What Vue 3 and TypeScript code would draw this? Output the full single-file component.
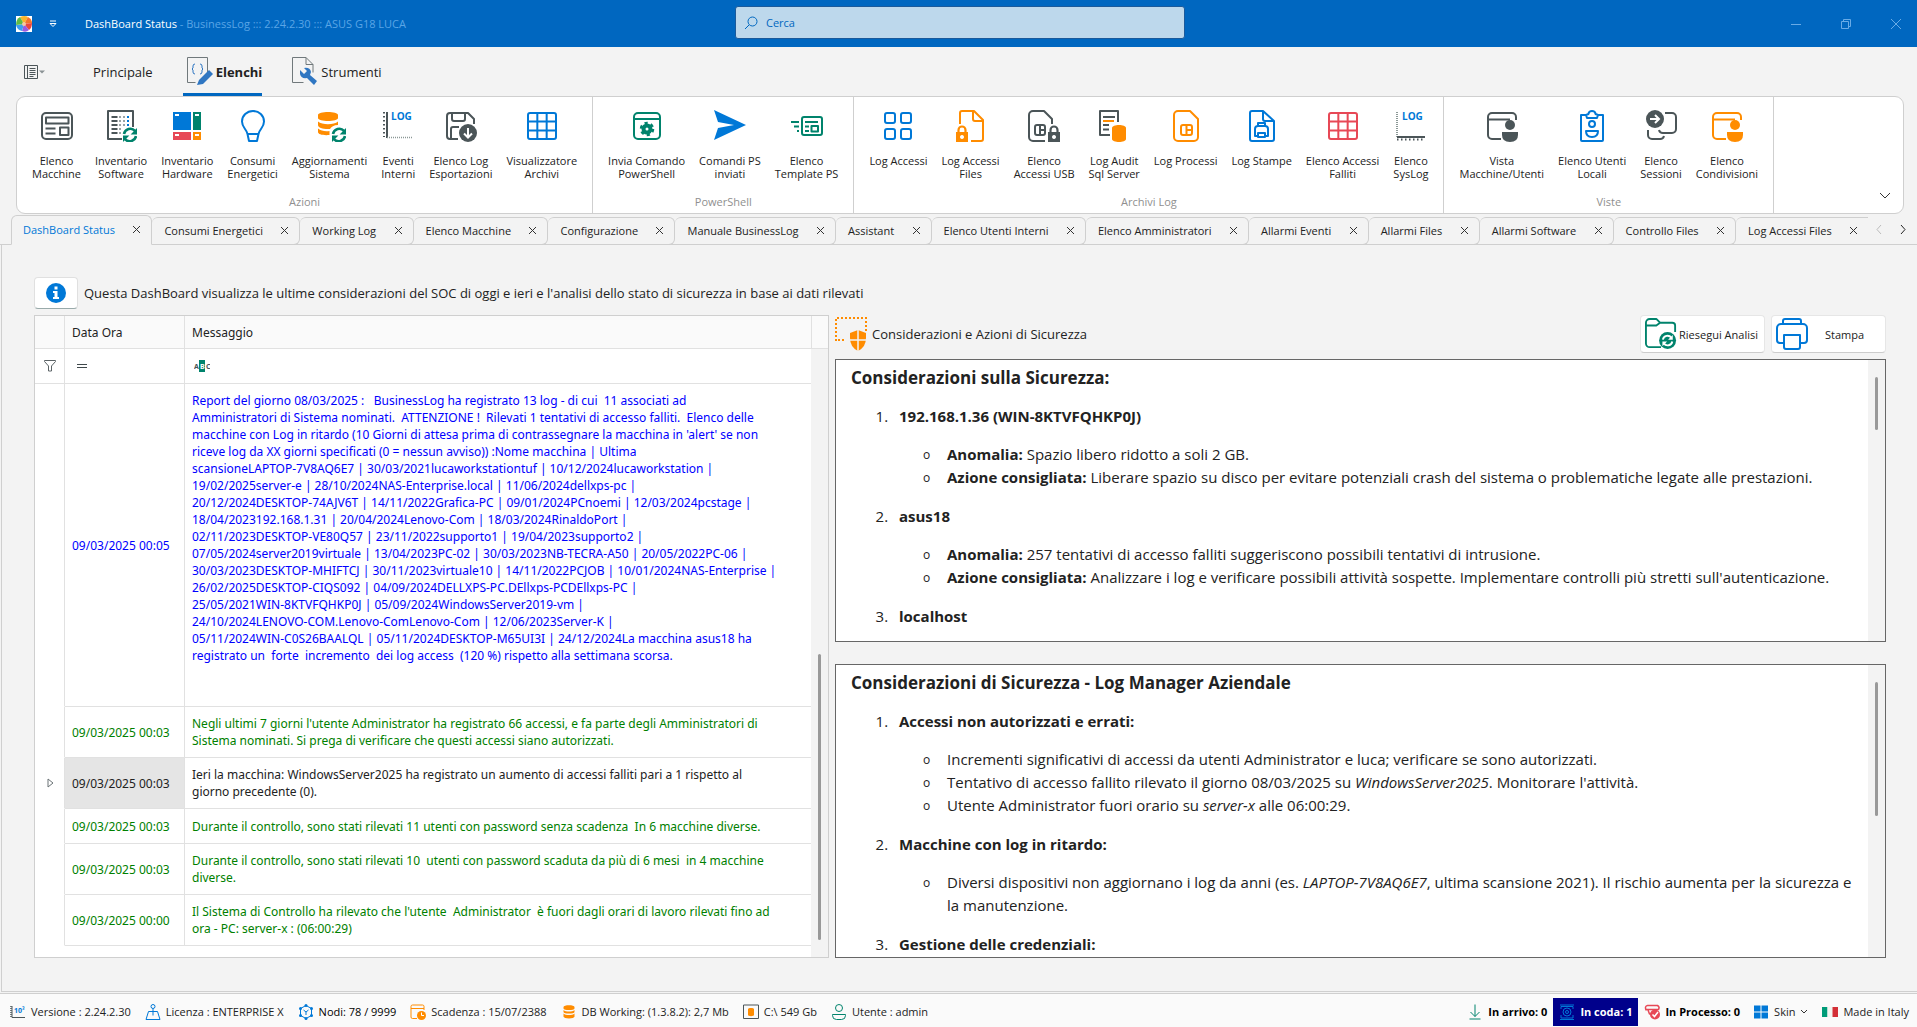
<script setup lang="ts">
import { ref } from 'vue'

interface RibbonItem { icon: string; lines: string[] }
interface RibbonGroup { title: string; items: RibbonItem[] }
interface LogRow { date: string; tone: string; text: string; selected?: boolean }
interface StatusItem { icon: string; text: string; kind?: string }

const D = '#4b5558'
const B = '#0078d7'
const G = '#00836c'
const O = '#ff8c00'
const R = '#e74856'

const outline = (color: string, body: string, width = 2) =>
  `<g fill="none" stroke="${color}" stroke-width="${width}" stroke-linejoin="round">${body}</g>`

const refresh = `<g fill="none" stroke="${G}" stroke-width="2.6"><path d="M19 24a6.4 6.4 0 0 1 11-3.2"/><path d="M31 26a6.4 6.4 0 0 1-11 3.2"/></g><path fill="${G}" d="M32 18v6.4h-6.4zM18 32v-6.4h6.4z"/>`
const grid = (color: string, x: number) =>
  outline(color, `<rect x="${x}" y="3" width="${32 - 2 * x}" height="26" rx="2"/><path d="M${x} 11.5h${32 - 2 * x}M${x} 20.5h${32 - 2 * x}M${x + (32 - 2 * x) / 3} 3v26M${x + (64 - 4 * x) / 3} 3v26"/>`)
const windowUser = (color: string) =>
  outline(color, '<path d="M15 29H6a4 4 0 0 1-4-4V7a4 4 0 0 1 4-4h20a4 4 0 0 1 4 4v3M2 9.500h22"/>') +
  `<circle cx="24" cy="15" r="5" fill="${color}"/><path fill="${color}" d="M16 22h16v3q0 7-8 7t-8-7z"/>`
const lock = (color: string, x: number, y: number) =>
  `<g transform="translate(${x} ${y})"><path fill="none" stroke="${color}" stroke-width="2.200" d="M2.500 7V5a3.500 3.500 0 0 1 7 0v2"/><path fill="${color}" fill-rule="evenodd" d="M0 7h12v10H0zM6 10a2 2 0 1 0 .01 0z"/></g>`

const icons: Record<string, string> = {
  list: outline(D, '<rect x="1" y="3" width="30" height="26" rx="4"/><rect x="5" y="7.500" width="22.500" height="6"/><path d="M4.500 18.500h10M4.500 23.500h10"/><rect x="19" y="17.500" width="8.500" height="7.500"/>'),
  software: outline(D, '<path d="M28 17V1H3v28h14"/><path d="M6.500 7h6M6.500 11h6M6.500 15h6M6.500 19h6M6.500 23h6"/>') +
    `<g stroke="#9aa3a5" stroke-width="2" stroke-dasharray="2 2"><path d="M14 7h7M14 11h7M14 15h7M14 19h4M14 23h2"/></g><path stroke="${B}" stroke-width="2" stroke-dasharray="2 2" d="M23 6v12"/>` + refresh,
  hardware: `<path fill="${B}" d="M2 2h18v18H2z"/><path fill="${G}" d="M22 2h8v18h-8z"/><path fill="${R}" d="M2 22h18v8H2z"/><path fill="${O}" d="M22 22h8v8h-8z"/><path fill="#fff" d="M4 4h4v2H4zM24 4h4v2h-4zM4 24h4v2H4zM24 24h4v2h-4z"/>`,
  bulb: outline(B, '<path d="M10.500 24C9.500 19 5 17.500 5 11.500a11 10.500 0 0 1 22 0C27 17.500 22.500 19 21.500 24zM10.500 24l1.500 7h8l1.500-7"/>'),
  dbrefresh: `<path fill="${O}" d="M4 5c0-4 20-4 20 0v3c0 4-20 4-20 0zM4 11.500c4 3.500 16 3.500 20 0V15c-4 0-7 2-8 4-6 .5-12-1-12-4zM4 18.500c3 2.500 7 3 11.500 2.500v4C9 25.500 4 24.500 4 22z"/>` + refresh,
  log: `<path stroke="${D}" stroke-width="2" d="M5 2v26"/><path stroke="${D}" stroke-width="2" stroke-dasharray="1.500 2.500" d="M2 2v25" fill="none"/><path stroke="#8b9896" stroke-width="1.500" stroke-dasharray="1 1" d="M5 27.500h26"/><text x="9" y="10" font-size="10" font-weight="700" fill="${B}">LOG</text>`,
  save: outline(D, '<path d="M13 29H5a3 3 0 0 1-3-3V6a3 3 0 0 1 3-3h18l6 6v5M7 3v6a2 2 0 0 0 2 2h9a2 2 0 0 0 2-2V3M6 29V19a2 2 0 0 1 2-2h6"/>') +
    `<circle cx="23" cy="23" r="9" fill="${D}"/><path fill="none" stroke="#fff" stroke-width="2" d="M23 18v9M19 23.500l4 4 4-4"/>`,
  gridblue: grid(B, 2),
  gridred: grid(R, 2),
  winGear: outline(G, '<rect x="3" y="3" width="26" height="26" rx="4"/><path d="M3 9h26"/>') +
    `<circle cx="16" cy="19" r="3.500" fill="none" stroke="${G}" stroke-width="4"/><circle cx="16" cy="19" r="6" fill="none" stroke="${G}" stroke-width="2.500" stroke-dasharray="3.140 3.140"/>`,
  send: `<path fill="${B}" d="M0 0l32 15L0 30l4-12 16-3L4 12z"/>`,
  template: outline(G, '<rect x="11" y="7" width="20" height="18" rx="2"/><path d="M0 12h8M3 16.500h5M6 21h2M14 12h13M14 16.500h4M14 21h4"/><rect x="20.500" y="16" width="6.500" height="5.500"/>'),
  tiles: outline(B, '<rect x="3" y="3" width="10" height="10" rx="2"/><rect x="19" y="3" width="10" height="10" rx="2"/><rect x="3" y="19" width="10" height="10" rx="2"/><rect x="19" y="19" width="10" height="10" rx="2"/>'),
  fileLock: outline(O, '<path d="M5 14V3a2 2 0 0 1 2-2h12l9 9v19a2 2 0 0 1-2 2H16M18 1v8a2 2 0 0 0 2 2h8"/>') + lock(O, 1, 15),
  simLock: outline(D, '<path d="M17 31H5a4 4 0 0 1-4-4V5a4 4 0 0 1 4-4h11l8 8v5"/><rect x="7" y="15" width="10" height="10" rx="2"/><path d="M12 15v10M12 20h5"/>') + lock(D, 20, 15),
  audit: outline(D, '<path d="M20 12V1H2v24h10"/><path d="M5 7h12M5 15h6M5 19.500h6"/>') + `<path stroke="${O}" stroke-width="2" d="M5 11h11"/><path fill="${O}" d="M14 18c0-4 14-4 14 0v11c0 4-14 4-14 0z"/>`,
  sim: outline(O, '<path d="M8 1h12l8 8v18a4 4 0 0 1-4 4H8a4 4 0 0 1-4-4V5a4 4 0 0 1 4-4z"/><rect x="11" y="15" width="11" height="10" rx="2"/><path d="M16.500 15v10M16.500 20h5.500"/>'),
  filePrint: outline(B, '<path d="M6 1h11l11 10v18a2 2 0 0 1-2 2H6a2 2 0 0 1-2-2V3a2 2 0 0 1 2-2zM17 1v8a2 2 0 0 0 2 2h9"/><path d="M12 16v-3h7v3M12 26H9v-7a3 3 0 0 1 3-3h7a3 3 0 0 1 3 3v7h-3M12 23h7v4h-7z"/>'),
  syslog: `<path stroke="#8b9896" stroke-width="2" stroke-dasharray="1 1" d="M2 2v25"/><path stroke="${D}" stroke-width="2" d="M2 27h28"/><path stroke="${D}" stroke-width="2" stroke-dasharray="1.500 2.500" d="M2 29.500h28"/><text x="7" y="10" font-size="10" font-weight="700" fill="${B}">LOG</text>`,
  vista: windowUser(D),
  condivisioni: windowUser(O),
  badge: outline(B, '<path d="M10 5H5v25a1 1 0 0 0 1 1h20a1 1 0 0 0 1-1V5h-5"/><path d="M12.500 4a3.500 3 0 0 1 7 0l2.500 1-1 3h-10l-1-3z"/><circle cx="16" cy="14" r="3"/><path d="M10 21h12q0 6-6 6t-6-6z"/>'),
  sessions: `<circle cx="10" cy="9" r="9" fill="${D}"/><path fill="none" stroke="#fff" stroke-width="2" d="M5 9h9M10 5l4 4-4 4"/>` +
    outline(D, '<path d="M20 3h7a4 4 0 0 1 4 4v12a4 4 0 0 1-4 4H18a4 4 0 0 1-4-3M3 20v5a4 4 0 0 0 4 4h8a4 4 0 0 0 4-3"/>'),
  folder: outline(G, '<path d="M17 31H5a4 4 0 0 1-4-4V5a4 4 0 0 1 4-4h7l4 4h13a3 3 0 0 1 3 3v7M1 8h11l4-3"/>') +
    `<circle cx="24" cy="24" r="9" fill="${G}"/><g fill="none" stroke="#fff" stroke-width="2"><path d="M19 23a5 5 0 0 1 9-2M29 25a5 5 0 0 1-9 2"/></g><path fill="#fff" d="M29.500 18v5h-5zM18.500 30v-5h5z"/>`,
  printer: outline(B, '<path d="M7 6V3a2 2 0 0 1 2-2h14a2 2 0 0 1 2 2v3M7 25H4a3 3 0 0 1-3-3V10a4 4 0 0 1 4-4h22a4 4 0 0 1 4 4v12a3 3 0 0 1-3 3h-3"/><path d="M8 17h16v12a2 2 0 0 1-2 2H10a2 2 0 0 1-2-2z"/>'),
  shield: `<path fill="none" stroke="${O}" stroke-width="2" stroke-dasharray="2 2" d="M1 24V1h30v13M3 23h8"/><path fill="${O}" d="M15 16l8-3 8 3v5q0 9-8 13-8-4-8-13z"/><path stroke="#f3f3f3" stroke-width="1.500" d="M23 12v22M14 23h18"/>`,
  version: `<path fill="none" stroke="${D}" stroke-width="2" d="M4 4v23h26"/><path stroke="${D}" stroke-width="3" stroke-dasharray="2 2" d="M2 4v22"/><text x="8" y="17" font-size="14" font-weight="700" fill="${B}">10³</text>`,
  licence: outline(B, '<circle cx="16" cy="5" r="4"/><path d="M16 9v14M7 15h18l5 16H2z"/>'),
  node: outline(B, '<path d="M16 3l11 6v14l-11 6-11-6V9zM16 16v6M16 16l-5-4M16 16l5-4"/>') + `<g fill="${B}"><circle cx="16" cy="3" r="3"/><circle cx="27" cy="9" r="3"/><circle cx="27" cy="23" r="3"/><circle cx="16" cy="29" r="3"/><circle cx="5" cy="23" r="3"/><circle cx="5" cy="9" r="3"/></g>`,
  expiry: outline(O, '<path d="M14 29H5a3 3 0 0 1-3-3V5a3 3 0 0 1 3-3h20a3 3 0 0 1 3 3v7M2 9h26"/>') + `<circle cx="23" cy="23" r="9" fill="${O}"/><path fill="none" stroke="#fff" stroke-width="2" d="M23 17v6h5"/>`,
  db: `<path fill="${O}" d="M5 6c0-5 22-5 22 0v3c0 4-22 4-22 0zM5 12c4 4 18 4 22 0v4c0 4-22 4-22 0zM5 19c4 4 18 4 22 0v6c0 5-22 5-22 0z"/>`,
  disk: outline(D, '<path d="M1 2h30v27H1z"/>') + `<path fill="${O}" d="M10 10c0-3 12-3 12 0v12c0 3-12 3-12 0z"/>`,
  user: outline(G, '<circle cx="16" cy="8" r="7"/><path d="M3 21h26v2q0 8-8 8H11q-8 0-8-8z"/>'),
  down: outline(G, '<path d="M16 1v24M7 16l9 9 9-9M5 30h22"/>'),
  queue: outline(B, '<path d="M4 10V5h24v5M4 22v6h24v-6M2 2h28M2 31h28"/><circle cx="16" cy="16" r="8"/><circle cx="16" cy="16" r="3"/>'),
  process: outline(R, '<path d="M4 12q-3-8 3-9h20q5 3 2 8H4zM8 12l3 8h4"/>', 3) + `<circle cx="22" cy="21" r="10" fill="${R}"/><path fill="none" stroke="#fff" stroke-width="3" d="M17 21l4 4 7-9"/>`,
  windows: `<path fill="${B}" d="M2 3h13v12H2zM17 3h13v12H17zM2 17h13v12H2zM17 17h13v12H17z"/>`,
  flag: `<path fill="#009b78" d="M0 6h11v20H0z"/><path fill="#f4f5f0" d="M11 6h10v20H11z"/><path fill="#d32f36" d="M21 6h11v20H21z"/>`,
}

const groups: RibbonGroup[] = [
  { title: 'Azioni', items: [
    { icon: 'list', lines: ['Elenco', 'Macchine'] },
    { icon: 'software', lines: ['Inventario', 'Software'] },
    { icon: 'hardware', lines: ['Inventario', 'Hardware'] },
    { icon: 'bulb', lines: ['Consumi', 'Energetici'] },
    { icon: 'dbrefresh', lines: ['Aggiornamenti', 'Sistema'] },
    { icon: 'log', lines: ['Eventi', 'Interni'] },
    { icon: 'save', lines: ['Elenco Log', 'Esportazioni'] },
    { icon: 'gridblue', lines: ['Visualizzatore', 'Archivi'] },
  ] },
  { title: 'PowerShell', items: [
    { icon: 'winGear', lines: ['Invia Comando', 'PowerShell'] },
    { icon: 'send', lines: ['Comandi PS', 'inviati'] },
    { icon: 'template', lines: ['Elenco', 'Template PS'] },
  ] },
  { title: 'Archivi Log', items: [
    { icon: 'tiles', lines: ['Log Accessi'] },
    { icon: 'fileLock', lines: ['Log Accessi', 'Files'] },
    { icon: 'simLock', lines: ['Elenco', 'Accessi USB'] },
    { icon: 'audit', lines: ['Log Audit', 'Sql Server'] },
    { icon: 'sim', lines: ['Log Processi'] },
    { icon: 'filePrint', lines: ['Log Stampe'] },
    { icon: 'gridred', lines: ['Elenco Accessi', 'Falliti'] },
    { icon: 'syslog', lines: ['Elenco', 'SysLog'] },
  ] },
  { title: 'Viste', items: [
    { icon: 'vista', lines: ['Vista', 'Macchine/Utenti'] },
    { icon: 'badge', lines: ['Elenco Utenti', 'Locali'] },
    { icon: 'sessions', lines: ['Elenco', 'Sessioni'] },
    { icon: 'condivisioni', lines: ['Elenco', 'Condivisioni'] },
  ] },
]

const tabs = [
  'DashBoard Status', 'Consumi Energetici', 'Working Log', 'Elenco Macchine', 'Configurazione',
  'Manuale BusinessLog', 'Assistant', 'Elenco Utenti Interni', 'Elenco Amministratori',
  'Allarmi Eventi', 'Allarmi Files', 'Allarmi Software', 'Controllo Files', 'Log Accessi Files',
]
const activeTab = ref(0)

const rows: LogRow[] = [
  { date: '09/03/2025 00:05', tone: 'blue', text: [
    'Report del giorno 08/03/2025 :   BusinessLog ha registrato 13 log - di cui  11 associati ad',
    'Amministratori di Sistema nominati.  ATTENZIONE !  Rilevati 1 tentativi di accesso falliti.  Elenco delle',
    "macchine con Log in ritardo (10 Giorni di attesa prima di contrassegnare la macchina in 'alert' se non",
    'riceve log da XX giorni specificati (0 = nessun avviso)) :Nome macchina | Ultima',
    'scansioneLAPTOP-7V8AQ6E7 | 30/03/2021lucaworkstationtuf | 10/12/2024lucaworkstation |',
    '19/02/2025server-e | 28/10/2024NAS-Enterprise.local | 11/06/2024dellxps-pc |',
    '20/12/2024DESKTOP-74AJV6T | 14/11/2022Grafica-PC | 09/01/2024PCnoemi | 12/03/2024pcstage |',
    '18/04/2023192.168.1.31 | 20/04/2024Lenovo-Com | 18/03/2024RinaldoPort |',
    '02/11/2023DESKTOP-VE80Q57 | 23/11/2022supporto1 | 19/04/2023supporto2 |',
    '07/05/2024server2019virtuale | 13/04/2023PC-02 | 30/03/2023NB-TECRA-A50 | 20/05/2022PC-06 |',
    '30/03/2023DESKTOP-MHIFTCJ | 30/11/2023virtuale10 | 14/11/2022PCJOB | 10/01/2024NAS-Enterprise |',
    '26/02/2025DESKTOP-CIQS092 | 04/09/2024DELLXPS-PC.DEllxps-PCDEllxps-PC |',
    '25/05/2021WIN-8KTVFQHKP0J | 05/09/2024WindowsServer2019-vm |',
    '24/10/2024LENOVO-COM.Lenovo-ComLenovo-Com | 12/06/2023Server-K |',
    '05/11/2024WIN-C0S26BAALQL | 05/11/2024DESKTOP-M65UI3I | 24/12/2024La macchina asus18 ha',
    'registrato un  forte  incremento  dei log access  (120 %) rispetto alla settimana scorsa.',
    ' ', ' '].join('\n') },
  { date: '09/03/2025 00:03', tone: 'green', text: "Negli ultimi 7 giorni l'utente Administrator ha registrato 66 accessi, e fa parte degli Amministratori di\nSistema nominati. Si prega di verificare che questi accessi siano autorizzati." },
  { date: '09/03/2025 00:03', tone: 'dark', selected: true, text: 'Ieri la macchina: WindowsServer2025 ha registrato un aumento di accessi falliti pari a 1 rispetto al\ngiorno precedente (0).' },
  { date: '09/03/2025 00:03', tone: 'green', text: 'Durante il controllo, sono stati rilevati 11 utenti con password senza scadenza  In 6 macchine diverse.' },
  { date: '09/03/2025 00:03', tone: 'green', text: 'Durante il controllo, sono stati rilevati 10  utenti con password scaduta da più di 6 mesi  in 4 macchine\ndiverse.' },
  { date: '09/03/2025 00:00', tone: 'green', text: "Il Sistema di Controllo ha rilevato che l'utente  Administrator  è fuori dagli orari di lavoro rilevati fino ad\nora - PC: server-x : (06:00:29)" },
]

const statusLeft: StatusItem[] = [
  { icon: 'version', text: 'Versione : 2.24.2.30' },
  { icon: 'licence', text: 'Licenza : ENTERPRISE X' },
  { icon: 'node', text: 'Nodi: 78 / 9999', kind: 'strong' },
  { icon: 'expiry', text: 'Scadenza : 15/07/2388' },
  { icon: 'db', text: 'DB Working: (1.3.8.2): 2,7 Mb' },
  { icon: 'disk', text: 'C:\\ 549 Gb' },
  { icon: 'user', text: 'Utente : admin' },
]
const statusRight: StatusItem[] = [
  { icon: 'down', text: 'In arrivo: 0', kind: 'bold' },
  { icon: 'queue', text: 'In coda: 1', kind: 'bold queue' },
  { icon: 'process', text: 'In Processo: 0', kind: 'bold' },
]
</script>

<template>
  <div class="app">
    <header class="titlebar">
      <div class="title-left">
        <svg class="logo" viewBox="0 0 16 16" aria-hidden="true">
          <rect width="16" height="16" fill="#fff" />
          <path fill="#f9b52b" d="M8 8L4 1q5-2 8 0z" />
          <path fill="#f2742b" d="M8 8l4-7q4 2 4 6z" />
          <path fill="#e8473f" d="M8 8l8-1q0 5-3 7z" />
          <path fill="#9a5be0" d="M8 8l5 6q-3 3-7 1z" />
          <path fill="#3c9ff0" d="M8 8l-2 7q-5-1-6-6z" />
          <path fill="#5dbb46" d="M8 8L0 9q0-6 4-8z" />
          <circle cx="8" cy="8" r="2" fill="#f6c9a0" />
        </svg>
        <button class="quick" aria-label="Personalizza barra">
          <svg viewBox="0 0 8 8"><path d="M1 1h6M1 3.500h6L4 6.500z" fill="none" stroke="#fff" /></svg>
        </button>
        <h1 class="title">DashBoard Status <span>- BusinessLog ::: 2.24.2.30 ::: ASUS G18 LUCA</span></h1>
      </div>
      <label class="search">
        <svg viewBox="0 0 14 14" aria-hidden="true"><circle cx="8.500" cy="5.500" r="4.500" /><path d="M5 9l-4 4" /></svg>
        <input type="text" placeholder="Cerca" aria-label="Cerca" />
      </label>
      <div class="window-buttons">
        <button aria-label="Riduci"><svg viewBox="0 0 10 10"><path d="M0 5.500h10" /></svg></button>
        <button aria-label="Ripristina"><svg viewBox="0 0 10 10"><path d="M.5 2.500h7v7h-7zM2.500 2.500v-2h7v7h-2" /></svg></button>
        <button aria-label="Chiudi"><svg viewBox="0 0 10 10"><path d="M0 0l10 10M10 0L0 10" /></svg></button>
      </div>
    </header>

    <nav class="ribbon-tabs">
      <button class="file-menu" aria-label="Menu file">
        <svg viewBox="0 0 22 14" fill="none" stroke="#4b5558"><path d="M.5.500h13v13H.5zM3.500.500v13M5.500 3.500h6M5.500 5.500h6M5.500 7.500h6M5.500 9.500h6M5.500 11.500h4" /><path d="M15 5.500h6l-3 3z" fill="#8a9294" stroke="none" /></svg>
      </button>
      <button class="ribbon-tab first">Principale</button>
      <button class="ribbon-tab current">
        <svg viewBox="0 0 26 30" aria-hidden="true"><path d="M.5.500h20v15M.5.500v25h8" fill="none" stroke="#70787b" /><path d="M8 7q-2 0-2 2v2l-1 1 1 1v2q0 2 2 2M13 7q2 0 2 2v2l1 1-1 1v2q0 2-2 2" fill="none" stroke="#2f76c2" /><path d="M10 28l2-5L22 13l4 4-10 10-6 1z" fill="#2f76c2" /></svg>
        Elenchi
      </button>
      <button class="ribbon-tab">
        <svg viewBox="0 0 26 30" aria-hidden="true"><path d="M14 .500H.5v25h11M14 .500l7 7v8M14 .500v7h7" fill="none" stroke="#70787b" /><path d="M8 13l4 4 3-3-3-3q6-1 7 4l-1 3 7 6-3 4-7-7q-6 1-7-4z" fill="#2f76c2" /></svg>
        Strumenti
      </button>
    </nav>

    <section class="ribbon">
      <div v-for="g in groups" :key="g.title" class="group">
        <div class="group-items">
          <button v-for="it in g.items" :key="it.icon" class="item">
            <svg viewBox="0 0 32 32" aria-hidden="true" v-html="icons[it.icon]"></svg>
            <span v-for="l in it.lines" :key="l">{{ l }}</span>
          </button>
        </div>
        <div class="group-title">{{ g.title }}</div>
      </div>
      <button class="collapse" aria-label="Comprimi barra"><svg viewBox="0 0 12 8"><path d="M1 1l5 5 5-5" fill="none" stroke="#333" /></svg></button>
    </section>

    <div class="doc-tabs">
      <div class="strip">
        <div v-for="(t, i) in tabs" :key="t" class="doc-tab" :class="{ active: i === activeTab }">
          <button class="tab-name" @click="activeTab = i">{{ t }}</button>
          <button class="tab-close" :aria-label="'Chiudi ' + t"><svg viewBox="0 0 9 9"><path d="M1 1l7 7M8 1L1 8" /></svg></button>
        </div>
      </div>
      <div class="tab-arrows">
        <button class="dim" aria-label="Schede precedenti"><svg viewBox="0 0 6 9"><path d="M5 0L1 4.500 5 9" /></svg></button>
        <button aria-label="Schede successive"><svg viewBox="0 0 6 9"><path d="M1 0l4 4.500L1 9" /></svg></button>
      </div>
    </div>

    <main class="page">
      <div class="intro">
        <button class="info" aria-label="Informazioni">
          <svg viewBox="0 0 20 20"><circle cx="10" cy="10" r="10" fill="#0078d7" /><path fill="#fff" d="M8.500 3.500h3v3h-3zM7 8h4.500v6H13v2H7v-2h1.500v-4H7z" /></svg>
        </button>
        <p>Questa DashBoard visualizza le ultime considerazioni del SOC di oggi e ieri e l'analisi dello stato di sicurezza in base ai dati rilevati</p>
      </div>

      <div class="columns">
        <div class="log-grid">
          <div class="table-area">
            <table>
              <colgroup><col class="c-mark" /><col class="c-date" /><col /></colgroup>
              <thead>
                <tr class="head"><th></th><th scope="col">Data Ora</th><th scope="col">Messaggio</th></tr>
                <tr class="filter">
                  <td><svg class="funnel" viewBox="0 0 12 12"><path d="M.5.500h11v1L7.500 6v5h-3V6L.5 1.500z" fill="none" stroke="#5b6366" /></svg></td>
                  <td><div class="filter-cell"><svg viewBox="0 0 16 12"><path d="M3 4.500h10M3 7.500h10" stroke="#3f484b" /></svg><input type="text" aria-label="Filtra Data Ora" /></div></td>
                  <td><div class="filter-cell"><svg viewBox="0 0 16 12"><rect x="5" width="6" height="12" fill="#00836c" /><text x="0" y="9" font-size="7" font-weight="700" fill="#4b5558">A</text><text x="6" y="9" font-size="7" font-weight="700" fill="#fff">B</text><text x="12" y="9" font-size="7" font-weight="700" fill="#4b5558">C</text></svg><input type="text" aria-label="Filtra Messaggio" /></div></td>
                </tr>
              </thead>
              <tbody>
                <tr v-for="(r, i) in rows" :key="i" :class="[r.tone, { selected: r.selected }]">
                  <td class="mark"><svg v-if="r.selected" viewBox="0 0 7 10"><path d="M1 1l5 4-5 4z" fill="none" stroke="#6b7376" /></svg></td>
                  <td class="date">{{ r.date }}</td>
                  <td class="msg">{{ r.text }}</td>
                </tr>
              </tbody>
            </table>
          </div>
          <div class="gutter"><div class="gutter-head"></div><div class="rail"><i class="thumb-grid"></i></div></div>
        </div>

        <section class="reports">
          <div class="report-head">
            <svg class="shield" viewBox="0 0 34 34" aria-hidden="true" v-html="icons.shield"></svg>
            <h2>Considerazioni e Azioni di Sicurezza</h2>
            <button class="action run"><svg viewBox="0 0 34 34" aria-hidden="true" v-html="icons.folder"></svg><span>Riesegui Analisi</span></button>
            <button class="action print"><svg viewBox="0 0 32 32" aria-hidden="true" v-html="icons.printer"></svg><span>Stampa</span></button>
          </div>

          <div class="report top">
            <article>
              <h3>Considerazioni sulla Sicurezza:</h3>
              <ol>
                <li><b>192.168.1.36 (WIN-8KTVFQHKP0J)</b>
                  <ul>
                    <li><b>Anomalia:</b> Spazio libero ridotto a soli 2 GB.</li>
                    <li><b>Azione consigliata:</b> Liberare spazio su disco per evitare potenziali crash del sistema o problematiche legate alle prestazioni.</li>
                  </ul>
                </li>
                <li><b>asus18</b>
                  <ul>
                    <li><b>Anomalia:</b> 257 tentativi di accesso falliti suggeriscono possibili tentativi di intrusione.</li>
                    <li><b>Azione consigliata:</b> Analizzare i log e verificare possibili attività sospette. Implementare controlli più stretti sull'autenticazione.</li>
                  </ul>
                </li>
                <li><b>localhost</b></li>
              </ol>
            </article>
            <div class="rail"><i class="thumb-top"></i></div>
          </div>

          <div class="report bottom">
            <article>
              <h3>Considerazioni di Sicurezza - Log Manager Aziendale</h3>
              <ol>
                <li><b>Accessi non autorizzati e errati:</b>
                  <ul>
                    <li>Incrementi significativi di accessi da utenti Administrator e luca; verificare se sono autorizzati.</li>
                    <li>Tentativo di accesso fallito rilevato il giorno 08/03/2025 su <em>WindowsServer2025</em>. Monitorare l'attività.</li>
                    <li>Utente Administrator fuori orario su <em>server-x</em> alle 06:00:29.</li>
                  </ul>
                </li>
                <li><b>Macchine con log in ritardo:</b>
                  <ul>
                    <li>Diversi dispositivi non aggiornano i log da anni (es. <em>LAPTOP-7V8AQ6E7</em>, ultima scansione 2021). Il rischio aumenta per la sicurezza e la manutenzione.</li>
                  </ul>
                </li>
                <li><b>Gestione delle credenziali:</b></li>
              </ol>
            </article>
            <div class="rail"><i class="thumb-bottom"></i></div>
          </div>
        </section>
      </div>
    </main>

    <footer class="status">
      <div v-for="s in statusLeft" :key="s.icon" class="stat" :class="s.kind">
        <svg viewBox="0 0 32 32" aria-hidden="true" v-html="icons[s.icon]"></svg>{{ s.text }}
      </div>
      <div class="spacer"></div>
      <div v-for="s in statusRight" :key="s.icon" class="stat" :class="s.kind">
        <svg viewBox="0 0 32 32" aria-hidden="true" v-html="icons[s.icon]"></svg>{{ s.text }}
      </div>
      <button class="stat"><svg viewBox="0 0 32 32" aria-hidden="true" v-html="icons.windows"></svg>Skin<svg class="chev" viewBox="0 0 8 6"><path d="M1 1l3 3 3-3" fill="none" stroke="#333" /></svg></button>
      <div class="stat"><svg viewBox="0 0 32 32" aria-hidden="true" v-html="icons.flag"></svg>Made in Italy</div>
    </footer>
  </div>
</template>

<style>
body { margin: 0; background: #f3f3f3; }
</style>

<style scoped>
.app {
  display: flex;
  flex-direction: column;
  height: 100vh;
  overflow: hidden;
  background: #f3f3f3;
  color: #222;
  font-family: "Open Sans", "Noto Sans", sans-serif;
  font-size: 12px;
}
.app * { box-sizing: border-box; }
button {
  margin: 0;
  padding: 0;
  border: 0;
  background: none;
  color: inherit;
  font: inherit;
}
svg { display: block; flex: none; }

.titlebar {
  display: grid;
  grid-template-columns: 735fr 450fr 732fr;
  align-items: center;
  height: 47px;
  flex: none;
  background: #0067c0;
}
.title-left { display: flex; align-items: center; padding-left: 16px; }
.logo { width: 16px; height: 16px; }
.quick { margin: 0 28px 0 17px; }
.quick svg { width: 8px; height: 8px; }
.title { margin: 0; font-size: 11px; font-weight: 400; color: #fff; white-space: pre; }
.title span { color: #5aa5e6; }
.search {
  display: flex;
  align-items: center;
  gap: 8px;
  height: 33px;
  padding: 0 8px;
  margin-top: -2px;
  border: 1px solid #1b5a9b;
  border-radius: 3px;
  background: #bdd8ec;
}
.search svg { width: 14px; height: 14px; fill: none; stroke: #0067c0; }
.search input {
  flex: 1;
  min-width: 0;
  border: 0;
  padding: 0;
  outline: 0;
  background: none;
  font: inherit;
  font-size: 11px;
}
.search input::placeholder { color: #0067c0; opacity: 1; }
.window-buttons { display: flex; justify-content: flex-end; gap: 40px; padding-right: 16px; }
.window-buttons svg { width: 10px; height: 10px; fill: none; stroke: #69abe6; }

.ribbon-tabs { display: flex; align-items: stretch; height: 49px; flex: none; padding-left: 24px; }
.file-menu svg { width: 22px; height: 14px; }
.ribbon-tab { display: flex; align-items: center; gap: 3px; margin-right: 30px; padding: 1px 0 0; font-size: 13px; }
.ribbon-tab svg { width: 26px; height: 30px; }
.ribbon-tab.first { margin: 0 30px 0 47px; }
.ribbon-tab.current { padding: 3px 0 0 4px; border-bottom: 3px solid #0067c0; font-weight: 700; }

.ribbon {
  display: flex;
  flex: none;
  height: 118px;
  margin: 0 13px 0 16px;
  border: 1px solid #cfcfcf;
  border-radius: 9px;
  background: #fff;
}
.group { display: flex; flex-direction: column; padding: 13px 8px 0; border-right: 1px solid #cfcfcf; }
.group-items { display: flex; flex: 1; }
.item { display: flex; flex-direction: column; align-items: center; padding: 0 7px; font-size: 11px; line-height: 13px; white-space: nowrap; }
.item svg { width: 32px; height: 32px; margin-bottom: 12px; }
.group-title { padding-bottom: 3px; text-align: center; font-size: 11px; line-height: 16px; color: #8f8f8f; }
.collapse { align-self: flex-end; margin: 0 12px 13px auto; }
.collapse svg { width: 12px; height: 8px; }

.doc-tabs { display: flex; flex: none; height: 31px; align-items: stretch; box-shadow: inset 0 -1px #cfcfcf; }
.strip { display: flex; flex: 1; min-width: 0; align-items: flex-end; padding-left: 11px; }
.doc-tab {
  display: flex;
  flex: 1 1 auto;
  align-items: center;
  height: 28px;
  padding: 0 10px 2px 12px;
  border: 1px solid #cfcfcf;
  border-left: 0;
  border-radius: 6px 6px 6px 0;
  font-size: 11px;
  white-space: nowrap;
}
.doc-tab:last-child { border-right: 0; border-radius: 6px 0 0 0; }
.doc-tab.active { height: 30px; padding-left: 11px; border-left: 1px solid #cfcfcf; border-bottom-color: #f3f3f3; border-radius: 6px 6px 0 0; background: #f3f3f3; color: #0078d7; }
.tab-name { flex: 1; text-align: left; }
.tab-close svg { width: 9px; height: 9px; fill: none; stroke: #333; }
.tab-arrows { display: flex; align-items: center; gap: 18px; padding: 0 11px 0 8px; }
.tab-arrows svg { width: 6px; height: 9px; fill: none; stroke: #222; stroke-width: 1; }
.tab-arrows .dim svg { stroke: #bbb; }

.page {
  display: flex;
  flex-direction: column;
  flex: 1;
  min-height: 0;
  padding: 32px 31px 33px 32px;
  border-left: 1px solid #cfcfcf;
  border-bottom: 1px solid #cfcfcf;
  margin-left: 1px;
}
.intro { display: flex; align-items: center; gap: 6px; flex: none; margin-bottom: 6px; }
.intro p { margin: 0; font-size: 13px; white-space: nowrap; }
.info { display: grid; place-items: center; width: 44px; height: 32px; border: 1px solid #e0e0e0; border-bottom-color: #9aa; border-radius: 4px; background: #fff; }
.info svg { width: 20px; height: 20px; }
.columns { display: grid; grid-template-columns: 795fr 1051fr; gap: 6px; flex: 1; min-height: 0; }

.log-grid { display: flex; min-width: 0; min-height: 0; border: 1px solid #cfcfcf; background: #fff; overflow: hidden; font-family: "Noto Sans", "Open Sans", sans-serif; }
.table-area { flex: 1; min-width: 0; }
table { width: 100%; table-layout: fixed; border-collapse: separate; border-spacing: 0; }
.c-mark { width: 30px; }
.c-date { width: 120px; }
th, td { padding: 8px 7px; line-height: 17px; text-align: left; border-right: 1px solid #e1e1e1; border-bottom: 1px solid #e1e1e1; }
.head th { height: 33px; padding: 0 7px; background: #fafafa; font-weight: 400; }
.filter td { height: 35px; padding: 0 7px; }
.filter td:last-child, .msg { border-right: 0; }
.head th:last-child { border-right: 0; }
.funnel { width: 12px; height: 12px; margin-left: 2px; }
.filter-cell { display: flex; align-items: center; gap: 6px; }
.filter-cell svg { width: 16px; height: 12px; margin-left: 2px; }
.filter-cell input { flex: 1; min-width: 0; height: 20px; border: 0; padding: 0; outline: 0; background: none; font: inherit; }
tbody tr { height: 35px; }
.msg { white-space: pre; }
.mark { border-bottom-color: transparent; padding: 0 0 0 12px; }
.mark svg { width: 7px; height: 10px; }
.blue { color: #00f; }
.green { color: #008000; }
.selected .date { background: #e5e5e5; }
.gutter { display: flex; flex-direction: column; width: 17px; }
.gutter-head { height: 33px; background: #fafafa; border-left: 1px solid #e1e1e1; border-bottom: 1px solid #e1e1e1; }
.rail { display: flex; flex-direction: column; align-items: center; width: 17px; flex: 1; background: #f3f3f3; }
.rail i { width: 3px; border-radius: 2px; background: #999; }
.thumb-grid { height: 47%; margin-top: 305px; }
.thumb-top { height: 19%; margin-top: 17px; }
.thumb-bottom { height: 46%; margin-top: 17px; }

.reports { display: flex; flex-direction: column; min-width: 0; min-height: 0; }
.report-head { display: flex; align-items: center; flex: none; height: 38px; margin-bottom: 6px; }
.shield { width: 34px; height: 34px; }
.report-head h2 { flex: 1; margin: 0 0 0 3px; font-size: 13px; font-weight: 400; }
.action { display: flex; align-items: center; height: 38px; padding: 0 4px; border: 1px solid #e6e6e6; border-bottom-color: #ccc; border-radius: 4px; background: #fff; font-size: 11px; }
.action svg { width: 32px; height: 32px; }
.action span { flex: 1; text-align: center; white-space: nowrap; }
.action.run { width: 125px; }
.action.print { width: 115px; margin-left: 6px; }
.report { display: flex; min-height: 0; border: 1px solid #666; background: #fff; overflow: hidden; }
.report .rail { flex: none; }
.report.top { flex: 283 1 0; margin-bottom: 22px; }
.report.bottom { flex: 295 1 0; }
article { flex: 1; min-width: 0; padding: 6px 8px 0 15px; font-size: 15px; line-height: 23px; }
article h3 { margin: 0 0 15px; font-size: 17px; line-height: 24px; }
article ol, article ul { margin: 0; padding: 0; }
article ol { padding-left: 41px; }
article ol > li { margin-bottom: 16px; padding-left: 7px; }
article ul { margin-top: 15px; padding-left: 48px; list-style: none; }
article ul li { margin: 0; }
article ul li::before { content: "o"; float: left; margin-left: -24px; font-size: 12px; }

.status { display: flex; align-items: center; flex: none; height: 34px; margin-top: 1px; padding: 2px 1px 0 3px; border-top: 1px solid #cfcfcf; background: #fafafa; font-size: 11px; }
.stat { display: flex; align-items: center; gap: 5px; height: 28px; padding: 0 7px; white-space: nowrap; }
.stat svg { width: 16px; height: 16px; }
.spacer { flex: 1; }
.strong { color: #000; }
.stat.bold { padding: 0 6px; font-weight: 700; color: #000; }
.stat.queue { background: #00008b; color: #fff; }
.stat .chev { width: 8px; height: 6px; }
</style>
